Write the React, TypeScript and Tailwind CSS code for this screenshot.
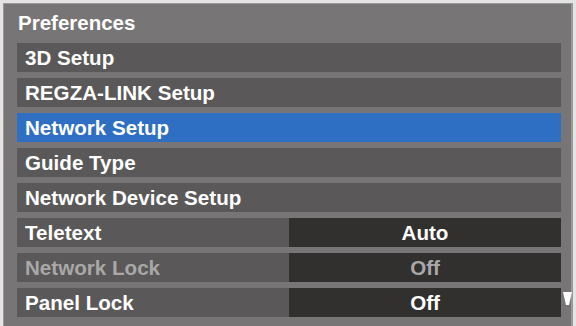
const ROWS = [
  { label: "3D Setup" },
  { label: "REGZA-LINK Setup" },
  { label: "Network Setup", active: true },
  { label: "Guide Type" },
  { label: "Network Device Setup" },
  { label: "Teletext", value: "Auto" },
  { label: "Network Lock", value: "Off", disabled: true },
  { label: "Panel Lock", value: "Off" },
];

export default function App() {
  return (
    <div
      className="h-[326px] w-[576px] overflow-hidden bg-[#e4e4e4] pl-[3px] pt-[3px]"
      style={{ fontFamily: '"Liberation Sans", Arial, sans-serif' }}
    >
      <div className="relative h-[330px] w-[570px] border-l border-t border-r-2 border-[#9a9898] bg-[#777575] pl-[13px] pr-[10px]">
        {/* Title */}
        <div className="flex h-[39px] items-center pb-[1px] pl-[1px] text-[20.5px] font-bold text-white">
          Preferences
        </div>

        <div className="flex flex-col gap-[6px]">
          {ROWS.map((row) => (
            <div
              key={row.label}
              className={[
                "flex h-[29px] items-center text-[20.6px] font-bold leading-none",
                row.active ? "bg-[#2e6fc4]" : "bg-[#5a5858]",
              ].join(" ")}
            >
              <div
                className={[
                  "flex h-full items-center pl-[8px] pt-[1px]",
                  row.value ? "w-[272px]" : "flex-1",
                  row.disabled ? "text-[#a9a7a7]" : "text-white",
                ].join(" ")}
              >
                {row.label}
              </div>
              {row.value && (
                <div
                  className={[
                    "flex h-full flex-1 items-center justify-center bg-[#322f2f] pt-[1px]",
                    row.disabled ? "text-[#a9a7a7]" : "text-white",
                  ].join(" ")}
                >
                  {row.value}
                </div>
              )}
            </div>
          ))}
        </div>

        {/* Scroll indicator */}
        <svg
          className="absolute right-[-1px] top-[288px]"
          width="9"
          height="13"
          viewBox="0 0 9 13"
        >
          <polygon points="0,0 9,0 6,13 3,13" fill="#ffffff" />
        </svg>
      </div>
    </div>
  );
}
